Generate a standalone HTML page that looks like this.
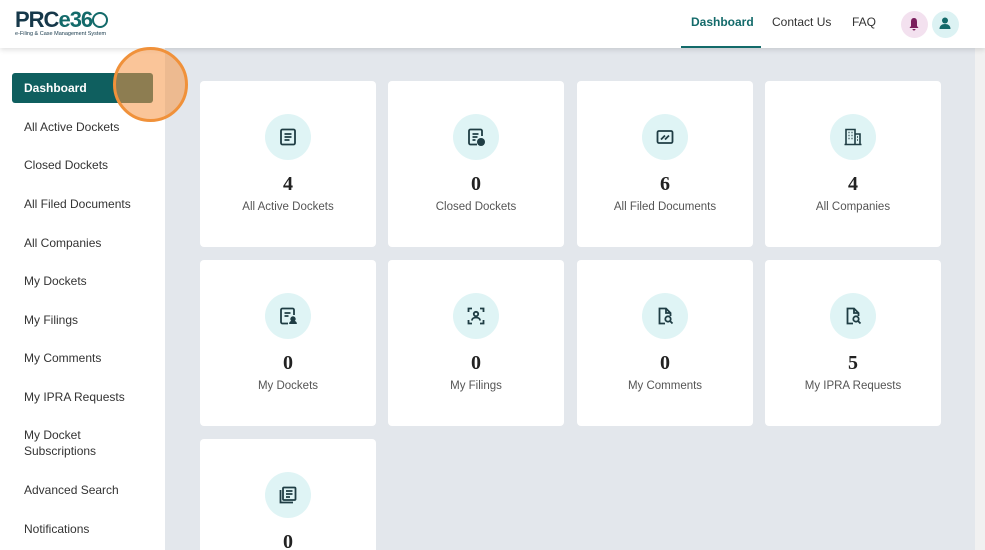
<!DOCTYPE html>
<html style="width:985px;height:550px;overflow:hidden"><head><style>
*{margin:0;padding:0;box-sizing:border-box}
body{width:985px;height:550px;overflow:hidden;background:#e3e7ec;font-family:"Liberation Sans",sans-serif;position:relative}
.hdr{position:absolute;left:0;top:0;width:985px;height:48px;background:#fff;box-shadow:0 2px 5px rgba(0,0,0,.12);z-index:3}
.side{position:absolute;left:0;top:48px;width:165px;height:502px;background:#fff}
.item{position:absolute;left:24px;font-size:12px;color:#333;line-height:16px}
.card{position:absolute;width:176px;height:166px;background:#fff;border-radius:4px;text-align:center}
.ic{position:absolute;left:65px;top:33px;width:46px;height:46px;border-radius:50%;background:#dff4f5}
.ic svg{position:absolute;left:13px;top:13px}
.num{position:absolute;left:0;width:100%;top:92px;font-family:"Liberation Serif",serif;font-weight:bold;font-size:20px;color:#222}
.lbl{position:absolute;left:0;width:100%;top:120px;font-size:11.5px;color:#555}
.nav{position:absolute;top:15px;font-size:12px;color:#333}
</style></head><body>
<div class="hdr">
 <div style="position:absolute;left:15px;top:7px;font-weight:bold;font-size:22px;color:#16384a;letter-spacing:-1px">PRC<span style="color:#136a6a">e36</span><span style="display:inline-block;width:16px;height:16px;border:2px solid #136a6a;border-radius:50%;vertical-align:-1px"></span></div>
 <div style="position:absolute;left:15px;top:31px;font-size:5.5px;color:#16384a">e-Filing &amp; Case Management System</div>
 <div class="nav" style="left:691px;font-weight:bold;color:#136a6a">Dashboard</div>
 <div style="position:absolute;left:681px;top:46px;width:80px;height:2px;background:#136a6a"></div>
 <div class="nav" style="left:772px">Contact Us</div>
 <div class="nav" style="left:852px">FAQ</div>
 <div style="position:absolute;left:901px;top:11px;width:27px;height:27px;border-radius:50%;background:#f3e1ef"></div>
 <svg style="position:absolute;left:908px;top:17px" width="12" height="14" viewBox="0 0 12 14"><path d="M6 1C3.5 1 3 3 3 5v4L1.5 11h9L9 9V5C9 3 8.5 1 6 1z M4.5 12h3a1.5 1.5 0 0 1-3 0z" fill="#7a1f5c"/></svg>
 <div style="position:absolute;left:932px;top:11px;width:27px;height:27px;border-radius:50%;background:#dcf2f3"></div>
 <svg style="position:absolute;left:939px;top:17px" width="12" height="13" viewBox="0 0 12 13"><circle cx="6" cy="3.5" r="3" fill="#136a6a"/><path d="M0.5 12c0-3.5 2.5-5 5.5-5s5.5 1.5 5.5 5z" fill="#136a6a"/></svg>
</div>
<div class="side">
 <div style="position:absolute;left:12px;top:25px;width:141px;height:30px;background:#0f5f5f;border-radius:3px;color:#fff;font-size:12px;font-weight:bold;padding:8px 12px">Dashboard</div>
 <div class="item" style="top:71px">All Active Dockets</div>
 <div class="item" style="top:109px">Closed Dockets</div>
 <div class="item" style="top:148px">All Filed Documents</div>
 <div class="item" style="top:187px">All Companies</div>
 <div class="item" style="top:225px">My Dockets</div>
 <div class="item" style="top:264px">My Filings</div>
 <div class="item" style="top:302px">My Comments</div>
 <div class="item" style="top:341px">My IPRA Requests</div>
 <div class="item" style="top:379px">My Docket<br>Subscriptions</div>
 <div class="item" style="top:434px">Advanced Search</div>
 <div class="item" style="top:473px">Notifications</div>
</div>
<div style="position:absolute;left:113px;top:47px;width:75px;height:75px;border-radius:50%;background:rgba(245,150,70,.55);border:3px solid #f0913a;z-index:4"></div>
<div style="position:absolute;left:975px;top:48px;width:10px;height:502px;background:#f1f1f1"></div>

<div class="card" style="left:200px;top:81px"><div class="ic"><svg width="20" height="20" viewBox="0 0 20 20" fill="none" stroke="#1f3d44" stroke-width="1.8"><rect x="3" y="2.5" width="14" height="15" rx="1.5"/><path d="M6.5 7h7M6.5 10h7M6.5 13h5"/></svg></div><div class="num">4</div><div class="lbl">All Active Dockets</div></div>
<div class="card" style="left:388px;top:81px"><div class="ic"><svg width="20" height="20" viewBox="0 0 20 20" fill="none" stroke="#1f3d44" stroke-width="1.8"><path d="M11 17.5H4.5a1.5 1.5 0 0 1-1.5-1.5V4a1.5 1.5 0 0 1 1.5-1.5h10A1.5 1.5 0 0 1 16 4v5"/><path d="M6.5 7h6M6.5 10h5M6.5 13h3"/><circle cx="15" cy="15" r="4" fill="#1f3d44" stroke="none"/></svg></div><div class="num">0</div><div class="lbl">Closed Dockets</div></div>
<div class="card" style="left:577px;top:81px"><div class="ic"><svg width="20" height="20" viewBox="0 0 20 20" fill="none" stroke="#1f3d44" stroke-width="1.8"><rect x="2.5" y="4" width="15" height="12" rx="1.5"/><path d="M6 12.5l4-4M10 12.5l4-4"/></svg></div><div class="num">6</div><div class="lbl">All Filed Documents</div></div>
<div class="card" style="left:765px;top:81px"><div class="ic"><svg width="20" height="20" viewBox="0 0 20 20" fill="none" stroke="#1f3d44" stroke-width="1.6"><path d="M3 17.5V2.5h9v15M12 7h5v10.5M1.5 17.5h17M5.5 5.5h1M8.5 5.5h1M5.5 8.5h1M8.5 8.5h1M5.5 11.5h1M8.5 11.5h1M14 10h1M14 13h1"/></svg></div><div class="num">4</div><div class="lbl">All Companies</div></div>

<div class="card" style="left:200px;top:260px"><div class="ic"><svg width="20" height="20" viewBox="0 0 20 20" fill="none" stroke="#1f3d44" stroke-width="1.8"><path d="M10 17.5H4.5A1.5 1.5 0 0 1 3 16V4a1.5 1.5 0 0 1 1.5-1.5h10A1.5 1.5 0 0 1 16 4v5"/><path d="M6.5 7h6M6.5 10h4"/><circle cx="15" cy="13" r="1.8" fill="#1f3d44"/><path d="M12 18c0-2 1.5-2.5 3-2.5s3 .5 3 2.5" fill="#1f3d44"/></svg></div><div class="num">0</div><div class="lbl">My Dockets</div></div>
<div class="card" style="left:388px;top:260px"><div class="ic"><svg width="20" height="20" viewBox="0 0 20 20" fill="none" stroke="#1f3d44" stroke-width="1.8"><path d="M2.5 6V2.5H6M14 2.5h3.5V6M17.5 14v3.5H14M6 17.5H2.5V14"/><circle cx="10" cy="8" r="2.2"/><path d="M6 14.5c0-2 2-3 4-3s4 1 4 3"/></svg></div><div class="num">0</div><div class="lbl">My Filings</div></div>
<div class="card" style="left:577px;top:260px"><div class="ic"><svg width="20" height="20" viewBox="0 0 20 20" fill="none" stroke="#1f3d44" stroke-width="1.8"><path d="M10 17.5H4.5V2.5H11l4.5 4.5v3"/><path d="M11 2.5V7h4.5"/><circle cx="13" cy="13" r="2.7"/><path d="M15 15l2.5 2.5"/></svg></div><div class="num">0</div><div class="lbl">My Comments</div></div>
<div class="card" style="left:765px;top:260px"><div class="ic"><svg width="20" height="20" viewBox="0 0 20 20" fill="none" stroke="#1f3d44" stroke-width="1.8"><path d="M10 17.5H4.5V2.5H11l4.5 4.5v3"/><path d="M11 2.5V7h4.5"/><circle cx="13" cy="13" r="2.7"/><path d="M15 15l2.5 2.5"/></svg></div><div class="num">5</div><div class="lbl">My IPRA Requests</div></div>

<div class="card" style="left:200px;top:439px;height:111px;border-radius:4px 4px 0 0"><div class="ic"><svg width="20" height="20" viewBox="0 0 20 20" fill="none" stroke="#1f3d44" stroke-width="1.8"><rect x="5" y="2.5" width="12.5" height="12.5" rx="1"/><path d="M2.5 5v12.5H15M8 6h6.5M8 9h6.5M8 12h4"/></svg></div><div class="num">0</div></div>
</body></html>
